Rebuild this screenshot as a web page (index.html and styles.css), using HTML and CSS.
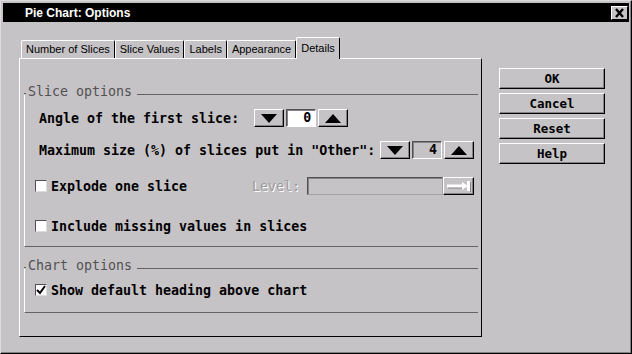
FILE: index.html
```html
<!DOCTYPE html>
<html lang="en">

<head>
    <meta charset="UTF-8">
    <title>Pie Chart: Options</title>
    <link rel="stylesheet" href="styles.css">
</head>

<body>
    <div class="window">
        <div class="titlebar">
            <span class="title">Pie Chart: Options</span>
            <button class="close-btn">
                <svg width="15" height="12" viewBox="0 0 15 12">
                    <path d="M4 2 L11 10 M11 2 L4 10" stroke="#000" stroke-width="2.4" fill="none" />
                </svg>
            </button>
        </div>

        <div class="dialog-body">
            <div class="notebook">
                <div class="tab-row">
                    <div class="tab">Number of Slices</div>
                    <div class="tab">Slice Values</div>
                    <div class="tab">Labels</div>
                    <div class="tab">Appearance</div>
                    <div class="tab tab-active">Details</div>
                </div>

                <div class="panel">
                    <div class="group">
                        <div class="group-head">
                            <span class="group-tick"></span>
                            <span class="group-label">Slice options</span>
                            <span class="group-line"></span>
                        </div>
                        <div class="group-box box-slice">
                            <div class="opt-row">
                                <span class="opt-label">Angle of the first slice:</span>
                                <div class="spinner spinner-angle">
                                    <button class="spin-btn">
                                        <svg width="16" height="9" viewBox="0 0 16 9"><polygon points="0,0 16,0 8,9" fill="#000" /></svg>
                                    </button>
                                    <div class="spin-field field-white">0</div>
                                    <button class="spin-btn">
                                        <svg width="16" height="9" viewBox="0 0 16 9"><polygon points="0,9 16,9 8,0" fill="#000" /></svg>
                                    </button>
                                </div>
                            </div>

                            <div class="opt-row row-max">
                                <span class="opt-label">Maximum size (%) of slices put in "Other":</span>
                                <div class="spinner spinner-right">
                                    <button class="spin-btn">
                                        <svg width="16" height="9" viewBox="0 0 16 9"><polygon points="0,0 16,0 8,9" fill="#000" /></svg>
                                    </button>
                                    <div class="spin-field">4</div>
                                    <button class="spin-btn">
                                        <svg width="16" height="9" viewBox="0 0 16 9"><polygon points="0,9 16,9 8,0" fill="#000" /></svg>
                                    </button>
                                </div>
                            </div>

                            <div class="opt-row row-explode">
                                <span class="check"></span>
                                <span class="check-label">Explode one slice</span>
                                <div class="level">
                                    <span class="level-label">Level:</span>
                                    <div class="level-field"></div>
                                    <button class="spin-btn level-btn">
                                        <svg width="26" height="14" viewBox="0 0 26 14">
                                            <path d="M2 8 H19" stroke="#848284" stroke-width="3" />
                                            <path d="M1 7 H18" stroke="#fff" stroke-width="3" />
                                            <polygon points="16,3 22,7 16,11" fill="#fff" />
                                            <rect x="21" y="2" width="3" height="10" fill="#fff" />
                                            <rect x="24" y="3" width="1" height="10" fill="#848284" />
                                        </svg>
                                    </button>
                                </div>
                            </div>

                            <div class="opt-row row-missing">
                                <span class="check"></span>
                                <span class="check-label">Include missing values in slices</span>
                            </div>
                        </div>
                    </div>

                    <div class="group group-chart">
                        <div class="group-head">
                            <span class="group-tick"></span>
                            <span class="group-label">Chart options</span>
                            <span class="group-line"></span>
                        </div>
                        <div class="group-box box-chart">
                            <div class="opt-row">
                                <span class="check">
                                    <svg width="10" height="10" viewBox="0 0 10 10">
                                        <path d="M1 5 L4 8 L9 1" stroke="#000" stroke-width="2" fill="none" />
                                    </svg>
                                </span>
                                <span class="check-label">Show default heading above chart</span>
                            </div>
                        </div>
                    </div>
                </div>
            </div>

            <div class="button-col">
                <button class="dlg-btn">OK</button>
                <button class="dlg-btn">Cancel</button>
                <button class="dlg-btn">Reset</button>
                <button class="dlg-btn">Help</button>
            </div>
        </div>
    </div>
</body>

</html>
```

FILE: styles.css
```css
* {
    box-sizing: border-box;
}

body {
    margin: 0;
    background-color: #c6c3c6;
    font-family: 'DejaVu Sans Mono', monospace;
}

.window {
    width: 632px;
    height: 354px;
    padding: 2px;
    background-color: #c6c3c6;
    border: 1px solid;
    border-color: #dedbde #000 #000 #dedbde;
    box-shadow: inset -1px -1px #848284;
}

.titlebar {
    height: 19px;
    background-color: #000;
    display: flex;
    align-items: center;
    padding-left: 22px;
}

.title {
    color: #fff;
    font-family: 'Liberation Sans', Arial, sans-serif;
    font-weight: bold;
    font-size: 12px;
}

.close-btn {
    margin-left: auto;
    margin-right: 1px;
    width: 17px;
    height: 14px;
    padding: 0;
    background-color: #c6c3c6;
    border: 1px solid;
    border-color: #fff #000 #000 #fff;
    display: flex;
    align-items: center;
    justify-content: center;
}

.dialog-body {
    display: flex;
    align-items: flex-start;
    padding: 15px 0 0 16px;
}

/* notebook with tabs */
.notebook {
    width: 463px;
}

.tab-row {
    display: flex;
    align-items: flex-end;
    height: 21px;
    padding-left: 2px;
}

.tab {
    height: 18px;
    padding: 0 4px;
    font-family: 'Liberation Sans', Arial, sans-serif;
    font-size: 11px;
    line-height: 17px;
    color: #000;
    border-top: 1px solid #fff;
    border-left: 1px solid #fff;
    border-right: 1px solid #000;
    border-radius: 2px 2px 0 0;
}

.tab-active {
    height: 22px;
    margin-bottom: -1px;
    line-height: 20px;
    background-color: #c6c3c6;
    position: relative;
    z-index: 1;
}

.panel {
    height: 279px;
    padding: 0 3px 0 4px;
    border: 1px solid;
    border-color: #fff #000 #000 #fff;
}

/* group boxes */
.group {
    margin-top: 26px;
}

.group-chart {
    margin-top: 12px;
}

.group-head {
    display: flex;
    align-items: flex-start;
    height: 10px;
}

.group-tick {
    width: 2px;
    height: 1px;
    margin-top: 8px;
    background-color: #636163;
}

.group-label {
    margin-left: 2px;
    height: 14px;
    line-height: 14px;
    font-size: 13.3px;
    color: #525152;
}

.group-line {
    flex: 1;
    height: 1px;
    margin: 9px 0 0 5px;
    background-color: #636163;
}

.group-box {
    border-left: 1px solid #fff;
    border-bottom: 1px solid #636163;
    padding: 14px 4px 11px 10px;
}

.box-chart {
    padding: 12px 4px 13px 10px;
}

.opt-row {
    display: flex;
    align-items: center;
    height: 18px;
    font-size: 13.3px;
    font-weight: bold;
    color: #000;
}

.row-max {
    margin-top: 14px;
}

.row-explode {
    margin-top: 18px;
}

.row-missing {
    margin-top: 22px;
}

.opt-label {
    padding-left: 4px;
    white-space: nowrap;
}

.check {
    width: 12px;
    height: 12px;
    background-color: #fff;
    border: 1px solid;
    border-color: #525152 #dedbde #dedbde #525152;
    display: flex;
    align-items: center;
    justify-content: center;
}

.check-label {
    margin-left: 4px;
    white-space: nowrap;
}

/* spinners */
.spinner {
    display: flex;
    gap: 2px;
}

.spinner-angle {
    margin-left: 15px;
}

.spinner-right {
    margin-left: auto;
}

.spin-btn {
    width: 30px;
    height: 18px;
    padding: 0;
    background-color: #c6c3c6;
    border: 1px solid;
    border-color: #fff #000 #000 #fff;
    box-shadow: inset -1px -1px #848284;
    display: flex;
    align-items: center;
    justify-content: center;
}

.spin-field {
    width: 30px;
    height: 18px;
    padding-right: 4px;
    text-align: right;
    line-height: 16px;
    border: 1px solid;
    border-color: #525152 #fff #fff #525152;
    box-shadow: inset 1px 1px #848284;
}

.field-white {
    background-color: #fff;
}

.level {
    margin-left: auto;
    display: flex;
    align-items: center;
}

.level-label {
    font-weight: normal;
    color: #9c9a9c;
    text-shadow: 1px 1px 0 #fff;
    margin-right: 7px;
}

.level-field {
    width: 136px;
    height: 18px;
    border: 1px solid;
    border-color: #525152 #a5a2a5 #a5a2a5 #525152;
    box-shadow: inset 1px 1px #848284;
}

.level-btn {
    width: 31px;
}

/* dialog buttons */
.button-col {
    margin: 31px 0 0 17px;
    display: flex;
    flex-direction: column;
    gap: 4px;
}

.dlg-btn {
    width: 106px;
    height: 21px;
    padding: 0;
    background-color: #c6c3c6;
    border: 1px solid;
    border-color: #fff #000 #000 #fff;
    box-shadow: inset -1px -1px #848284;
    font-family: 'DejaVu Sans Mono', monospace;
    font-weight: bold;
    font-size: 12.5px;
    color: #000;
}
```
